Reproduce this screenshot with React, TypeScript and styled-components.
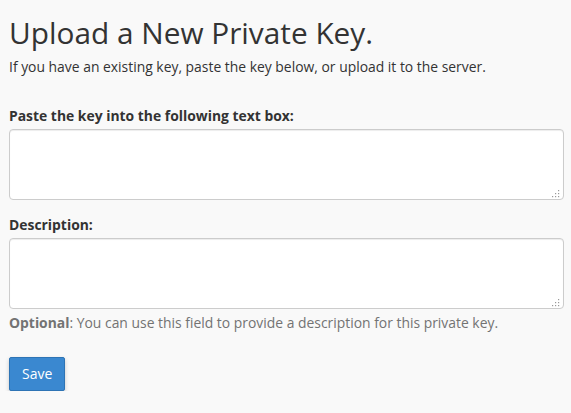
import React from "react";
import styled, { createGlobalStyle } from "styled-components";

const Global = createGlobalStyle`
  html, body { margin: 0; padding: 0; background: #f9f9f9; }
  body { font-family: "Open Sans", "Liberation Sans", sans-serif; color: #333; font-size: 14px; line-height: 1.42857; }
`;

const Page = styled.div`
  padding: 0 7px 0 9px;
`;

const Title = styled.h1`
  font-size: 29.8px;
  font-weight: 400;
  margin: 13px 0 0;
  line-height: 40px;
  color: #333;
`;

const Intro = styled.p`
  margin: 4px 0 29px;
  line-height: 20px;
  font-size: 13.9px;
`;

const Field = styled.div<{ $gap?: number }>`
  margin-bottom: ${(p) => p.$gap ?? 15}px;
`;

const Label = styled.label`
  display: block;
  font-weight: 700;
  margin-bottom: 3px;
  line-height: 20px;
  font-size: 13.9px;
`;

const AreaWrap = styled.div`
  position: relative;
`;

const TextArea = styled.textarea`
  display: block;
  box-sizing: border-box;
  width: 100%;
  height: 71px;
  border: 1px solid #ccc;
  border-radius: 4px;
  background: #fff;
  box-shadow: inset 0 1px 1px rgba(0,0,0,0.075);
  font-family: inherit;
  font-size: 14px;
  padding: 6px 12px;
  margin: 0;
  resize: none;
`;

const Grip = styled.svg`
  position: absolute;
  right: 4px;
  bottom: 2px;
  width: 8px;
  height: 8px;
  pointer-events: none;
`;

const Help = styled.p`
  margin: 4px 0 0;
  color: #737373;
  line-height: 20px;
  font-size: 13.9px;
  strong { font-weight: 700; }
`;

const SaveButton = styled.button`
  margin-top: 24px;
  font-family: inherit;
  font-size: 14px;
  line-height: 20px;
  padding: 5px 12px;
  height: 34px;
  width: 56px;
  color: #fff;
  background: #3a88d0;
  border: 1px solid #2e74b5;
  border-radius: 2px;
  box-shadow: 0 2px 4px rgba(0,0,0,0.2);
  cursor: pointer;
`;

const dots = [
  [6, 0],
  [3, 3], [6, 3],
  [0, 6], [3, 6], [6, 6],
];

function ResizeGrip() {
  return (
    <Grip viewBox="0 0 8 8" aria-hidden="true">
      {dots.map(([x, y]) => (
        <rect key={`${x}-${y}`} x={x} y={y} width={1.2} height={1.2} fill="#999" />
      ))}
    </Grip>
  );
}

function Area({ id }: { id: string }) {
  return (
    <AreaWrap>
      <TextArea id={id} />
      <ResizeGrip />
    </AreaWrap>
  );
}

export default function App() {
  return (
    <Page>
      <Global />
      <Title>Upload a New Private Key.</Title>
      <Intro>If you have an existing key, paste the key below, or upload it to the server.</Intro>
      <Field $gap={15}>
        <Label htmlFor="key">Paste the key into the following text box:</Label>
        <Area id="key" />
      </Field>
      <Field $gap={0}>
        <Label htmlFor="desc">Description:</Label>
        <Area id="desc" />
        <Help><strong>Optional</strong>: You can use this field to provide a description for this private key.</Help>
      </Field>
      <SaveButton type="button">Save</SaveButton>
    </Page>
  );
}
